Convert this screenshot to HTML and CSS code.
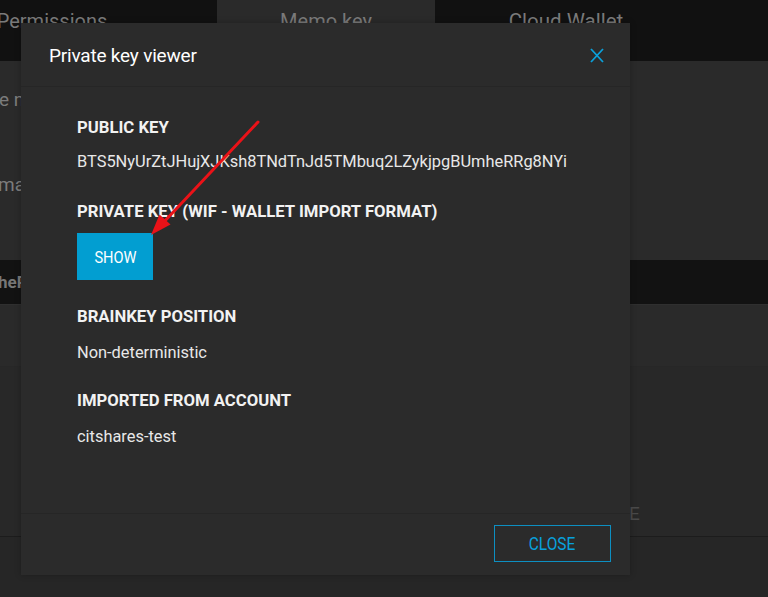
FILE: index.html
```html
<!DOCTYPE html>
<html lang="en">
<head>
<meta charset="utf-8">
<title>Private key viewer</title>
<link rel="stylesheet" href="styles.css">
</head>
<body>
<div class="page">
  <nav class="tabs">
    <div class="tab tab-perm">Permissions</div>
    <div class="tab tab-memo active">Memo key</div>
    <div class="tab tab-cloud">Cloud Wallet</div>
  </nav>
  <section class="pane pane-top">
    <p class="bg-line line1">e name of the memo key</p>
    <p class="bg-line line2">max</p>
  </section>
  <div class="band"><span class="band-text">heRe</span></div>
  <section class="pane pane-mid"></section>
  <section class="pane pane-low"><span class="bg-e">E</span></section>
</div>

<div class="modal">
  <header class="modal-head">
    <h1 class="modal-title">Private key viewer</h1>
    <button class="modal-x" aria-label="Close">
      <svg width="14" height="15" viewBox="0 0 14 15"><path d="M1 1 L13 14 M13 1 L1 14" stroke="#0ba0da" stroke-width="1.8" fill="none"/></svg>
    </button>
  </header>
  <div class="modal-body">
    <div class="label">PUBLIC KEY</div>
    <div class="value v-gap">BTS5NyUrZtJHujXJKsh8TNdTnJd5TMbuq2LZykjpgBUmheRRg8NYi</div>
    <div class="label l-btn">PRIVATE KEY (WIF - WALLET IMPORT FORMAT)</div>
    <button class="show-btn"><span class="cond">SHOW</span></button>
    <div class="label l-lo">BRAINKEY POSITION</div>
    <div class="value v-gap2">Non-deterministic</div>
    <div class="label l-lo">IMPORTED FROM ACCOUNT</div>
    <div class="value">citshares-test</div>
  </div>
  <footer class="modal-foot">
    <button class="close-btn"><span class="cond">CLOSE</span></button>
  </footer>
</div>

<svg class="arrow" width="768" height="597" viewBox="0 0 768 597">
  <line x1="258" y1="122" x2="162" y2="224" stroke="#ea1218" stroke-width="3" stroke-linecap="round"/>
  <polygon points="151,235 170.5,224.5 159.5,214.5" fill="#ea1218"/>
</svg>
</body>
</html>
```

FILE: styles.css
```css
* { box-sizing: border-box; }
html, body { margin: 0; padding: 0; }
body {
  width: 768px;
  height: 597px;
  overflow: hidden;
  background: #262626;
  font-family: Roboto, "Liberation Sans", sans-serif;
  position: relative;
}
.page { display: flex; flex-direction: column; }
.tabs {
  display: flex;
  height: 61px;
  background: #111111;
}
.tab {
  height: 61px;
  padding-top: 10px;
  text-align: center;
  font-size: 20px;
  line-height: 22px;
  color: #7a7a7a;
}
.tab-perm { width: 330px; margin-left: -113px; }
.tab-memo { width: 218px; }
.tab-cloud { width: 262px; font-size: 20.5px; }
.tab.active { background: #2a2a2a; }

.pane-top {
  height: 199px;
  background: #2a2a2a;
  padding-top: 28px;
}
.bg-line {
  margin: 0;
  font-size: 19px;
  line-height: 22px;
  color: #7c7c7c;
  white-space: nowrap;
}
.line1 { margin-left: -1px; }
.line2 { margin-top: 63px; margin-left: -2px; }
.band {
  height: 45px;
  background: #121212;
  border-bottom: 1px solid #2f2f2f;
  padding-top: 11px;
}
.band-text {
  display: block;
  margin-left: -2px;
  font-size: 17px;
  font-weight: 700;
  line-height: 22px;
  color: #777;
}
.pane-mid {
  height: 62px;
  background: #2a2a2a;
  border-bottom: 1px solid #272727;
}
.pane-low {
  height: 170px;
  background: #282828;
  border-bottom: 1px solid #1c1c1c;
  position: relative;
  display: flex;
  align-items: flex-end;
  padding-left: 629px;
  padding-bottom: 11px;
}
.bg-e {
  font-size: 19px;
  line-height: 22px;
  color: #4a4a4a;
}

.modal {
  position: absolute;
  left: 21px;
  top: 23px;
  width: 609px;
  height: 552px;
  background: #2b2b2b;
  display: flex;
  flex-direction: column;
  box-shadow: 0 0 6px rgba(0,0,0,0.25);
}
.modal-head {
  height: 64px;
  border-bottom: 1px solid #262626;
  display: flex;
  align-items: center;
  justify-content: space-between;
  padding: 0 26px 0 28px;
}
.modal-title {
  margin: 0;
  font-size: 19px;
  font-weight: 400;
  color: #ffffff;
  line-height: 24px;
  letter-spacing: -0.2px;
  padding-top: 3px;
}
.modal-x {
  background: none;
  border: 0;
  padding: 0;
  width: 14px;
  height: 15px;
  margin-top: 2px;
  display: block;
}
.modal-x svg { display: block; }

.modal-body {
  flex: 1;
  padding: 31px 56px 0;
}
.label {
  font-size: 16.7px;
  font-weight: 700;
  line-height: 20px;
  color: #f2f2f2;
  margin-bottom: 14px;
  white-space: nowrap;
}
.value {
  font-size: 16.4px;
  line-height: 20px;
  color: #e8e8e8;
  white-space: nowrap;
}
.v-gap { margin-bottom: 30px; }
.v-gap2 { margin-bottom: 28px; }
.l-btn { margin-bottom: 11px; }
.l-lo { margin-bottom: 16px; }
.show-btn {
  display: block;
  width: 76px;
  height: 47px;
  border: 0;
  background: #029ed1;
  color: #ffffff;
  font-family: inherit;
  font-size: 17px;
  padding: 0;
  margin-bottom: 27px;
}
.cond {
  display: inline-block;
  transform: scaleX(0.86);
}
.modal-foot {
  height: 62px;
  border-top: 1px solid #262626;
  display: flex;
  justify-content: flex-end;
  align-items: flex-start;
  padding: 11px 19px 0 0;
}
.close-btn {
  width: 117px;
  height: 37px;
  background: transparent;
  border: 1px solid #0d8fc1;
  color: #08a0dc;
  font-family: inherit;
  font-size: 18px;
  padding: 0;
}
.arrow {
  position: absolute;
  left: 0;
  top: 0;
  pointer-events: none;
}
```
